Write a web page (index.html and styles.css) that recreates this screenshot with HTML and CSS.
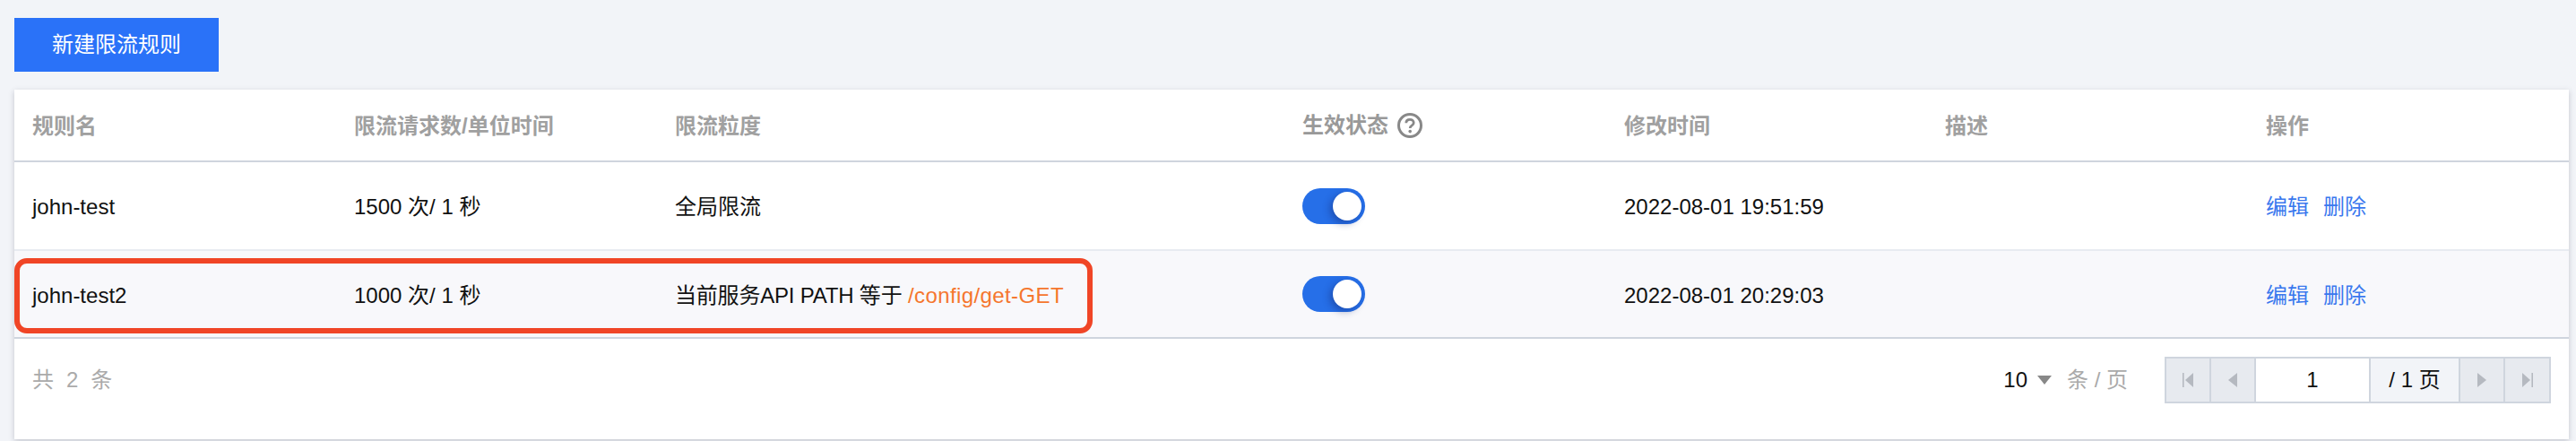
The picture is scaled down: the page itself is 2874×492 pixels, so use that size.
FILE: index.html
```html
<!DOCTYPE html>
<html lang="zh-CN">
<head>
  <meta charset="UTF-8" />
  <title>限流规则</title>
  <link rel="stylesheet" href="styles.css">
</head>
<body>
  <button class="btn-primary">新建限流规则</button>
  <div class="card">
    <table class="rules">
      <colgroup>
        <col class="c-name"><col class="c-limit"><col class="c-scope"><col class="c-state"><col class="c-time"><col class="c-desc"><col class="c-ops">
      </colgroup>
      <thead>
        <tr>
          <th>规则名</th>
          <th>限流请求数/单位时间</th>
          <th>限流粒度</th>
          <th class="cell-state">
            <span class="th-state">生效状态
              <svg class="help" width="28" height="28" viewBox="0 0 28 28">
                <circle cx="14" cy="14" r="12.5" fill="none" stroke="#888" stroke-width="3"/>
                <path d="M9.8 11.2c0-2.4 1.8-3.9 4.2-3.9s4.2 1.5 4.2 3.6c0 1.6-.9 2.4-2.1 3.2-1.2.8-1.9 1.4-1.9 2.9" fill="none" stroke="#888" stroke-width="2.8"/>
                <circle cx="14.2" cy="20.6" r="1.8" fill="#888"/>
              </svg>
            </span>
          </th>
          <th>修改时间</th>
          <th>描述</th>
          <th>操作</th>
        </tr>
      </thead>
      <tbody>
        <tr>
          <td>john-test</td>
          <td>1500 次/ 1 秒</td>
          <td>全局限流</td>
          <td class="cell-state"><span class="switch"><span class="knob"></span></span></td>
          <td>2022-08-01 19:51:59</td>
          <td></td>
          <td><a class="link">编辑</a><a class="link">删除</a></td>
        </tr>
        <tr class="alt">
          <td>john-test2</td>
          <td>1000 次/ 1 秒</td>
          <td><span class="prefix">当前服务API PATH 等于 </span><span class="path">/config/get-GET</span></td>
          <td class="cell-state"><span class="switch"><span class="knob"></span></span></td>
          <td>2022-08-01 20:29:03</td>
          <td></td>
          <td><a class="link">编辑</a><a class="link">删除</a></td>
        </tr>
      </tbody>
    </table>
    <div class="highlight"></div>
    <div class="footer">
      <div class="total"><span>共</span><span>2</span><span>条</span></div>
      <div class="pager">
        <span class="size">10</span>
        <span class="caret"></span>
        <span class="per">条 / 页</span>
        <div class="pages">
          <span class="pg-btn">
            <svg width="12" height="16" viewBox="0 0 12 16"><rect width="1.6" height="16" fill="#b5b9c0"/><path d="M12 0v16L3 8z" fill="#b5b9c0"/></svg>
          </span>
          <span class="pg-btn">
            <svg width="10" height="16" viewBox="0 0 10 16"><path d="M10 0v16L0 8z" fill="#b5b9c0"/></svg>
          </span>
          <span class="pg-input">1</span>
          <span class="pg-count">/ 1 页</span>
          <span class="pg-btn">
            <svg width="10" height="16" viewBox="0 0 10 16"><path d="M0 0v16l10-8z" fill="#b5b9c0"/></svg>
          </span>
          <span class="pg-btn pg-last">
            <svg width="12" height="16" viewBox="0 0 12 16"><path d="M0 0v16l9-8z" fill="#b5b9c0"/><rect x="10.4" width="1.6" height="16" fill="#b5b9c0"/></svg>
          </span>
        </div>
      </div>
    </div>
  </div>
</body>
</html>
```

FILE: styles.css
```css
* {
  box-sizing: border-box;
}
body {
  margin: 0;
  padding: 20px 8px 2px 16px;
  background-color: #f2f4f8;
  color: #111;
  font-family: "Liberation Sans", "Noto Sans CJK SC", sans-serif;
  font-size: 24px;
  line-height: 32px;
}
.btn-primary {
  display: block;
  width: 228px;
  height: 60px;
  margin: 0 0 20px;
  padding: 0;
  border: 0;
  background: #2a72f8;
  color: #fff;
  font: inherit;
}
.card {
  position: relative;
  height: 390px;
  background: #fff;
  box-shadow: 0 2px 6px rgba(54, 58, 80, 0.25);
}
.rules {
  width: 2850px;
  border-collapse: separate;
  border-spacing: 0;
  table-layout: fixed;
}
.c-name { width: 359px; }
.c-limit { width: 358px; }
.c-scope { width: 700px; }
.c-state { width: 359px; }
.c-time { width: 358px; }
.c-desc { width: 358px; }
.c-ops { width: 358px; }
.rules th,
.rules td {
  padding: 3px 0 0 20px;
  text-align: left;
  white-space: nowrap;
}
.rules th {
  height: 81px;
  border-bottom: 2px solid #cfd5de;
  color: #a0a0a0;
  font-weight: bold;
}
.rules td {
  height: 99px;
  border-bottom: 2px solid #e8ebf1;
}
.rules tr.alt td {
  height: 98px;
  background: #f8f8fb;
  border-bottom-color: #cfd5de;
}
.rules .cell-state {
  padding-top: 0;
}
.th-state {
  display: inline-flex;
  align-items: center;
  gap: 10px;
  color: #999;
}
.switch {
  display: flex;
  justify-content: flex-end;
  align-items: center;
  width: 70px;
  height: 40px;
  padding-right: 4px;
  border-radius: 20px;
  background: #266fe8;
}
.knob {
  width: 32px;
  height: 32px;
  border-radius: 50%;
  background: #fff;
  box-shadow: -3px 3px 8px rgba(20, 40, 110, 0.45);
}
.link {
  margin-right: 16px;
  color: #3a78ee;
}
.prefix {
  letter-spacing: -0.2px;
}
.path {
  color: #f5762d;
  letter-spacing: 0.4px;
}
.highlight {
  position: absolute;
  left: 0;
  top: 188px;
  width: 1203px;
  height: 84px;
  border: 6px solid #f04526;
  border-radius: 14px;
}
.footer {
  display: flex;
  justify-content: space-between;
  align-items: center;
  height: 112px;
  padding: 0 20px 20px;
}
.total {
  display: flex;
  gap: 14px;
  color: #aaa;
}
.pager {
  display: flex;
  align-items: center;
}
.caret {
  width: 0;
  height: 0;
  margin: 0 17px 0 11px;
  border-left: 8px solid transparent;
  border-right: 8px solid transparent;
  border-top: 10px solid #888;
}
.per {
  margin-right: 41px;
  color: #aaa;
}
.pages {
  display: flex;
  height: 52px;
  border: 2px solid #cfd5de;
}
.pages > span {
  display: flex;
  align-items: center;
  justify-content: center;
  border-right: 2px solid #cfd5de;
}
.pages > span:last-child {
  border-right: 0;
}
.pg-btn {
  width: 50px;
  background: #e7eaef;
}
.pg-last {
  width: 49px;
}
.pg-input {
  width: 128px;
  background: #fff;
}
.pg-count {
  width: 100px;
  background: #f2f4f8;
}
```
